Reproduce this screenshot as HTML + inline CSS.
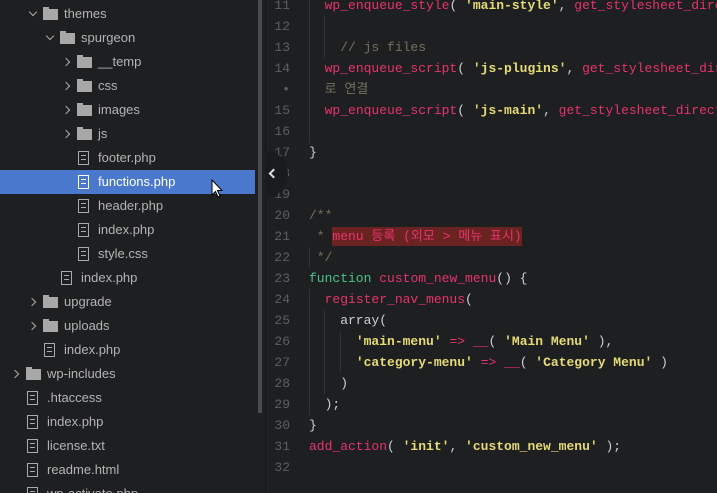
<!DOCTYPE html>
<html style="overflow:hidden"><head><meta charset="utf-8"><style>
body{margin:0;width:717px;height:493px;overflow:hidden;background:#1d1f21;position:relative;font-family:"Liberation Sans","Noto Sans CJK KR",sans-serif}
#side{position:absolute;left:0;top:0;width:258px;height:493px;background:#1e1f21;overflow:hidden}
.r{position:absolute;left:0;width:255px;height:24px;color:#b4b4b4;font-size:13px;line-height:24px}
.r.sel{background:#4a78cc;color:#fff}
.r span{position:absolute}
.chev{width:5px;height:5px;border-right:1.6px solid #aaa;border-bottom:1.6px solid #aaa;position:absolute}
.ch-r{transform:rotate(-45deg);top:9px}
.ch-d{transform:rotate(45deg);top:7px}
.fold{position:absolute;top:7px;width:15px;height:11px;background:#a8a8a8}
.fold:before{content:"";position:absolute;left:0;top:-2px;width:6px;height:2px;background:#a8a8a8}
.file{position:absolute;top:5px;width:11px;height:14px;border:1.3px solid #aaa;box-sizing:border-box;background:repeating-linear-gradient(#0000 0 3px,#aaa 3px 4px);background-clip:content-box;padding:2px 2px 1px 2px}
.sel .file{border-color:#fff;background:repeating-linear-gradient(#0000 0 3px,#fff 3px 4px);background-clip:content-box}
#sb{position:absolute;left:258px;top:0;width:4px;height:413px;background:#4b4b4b}
#gut{position:absolute;left:265px;top:0;width:40px;height:493px;background:#1d1f21;border-left:1px solid #151515}
.ln{position:absolute;left:265px;width:25px;text-align:right;color:#5e5e5e;font:13px "Liberation Mono",monospace;line-height:21px}
.c{position:absolute;left:309px;width:408px;overflow:hidden;white-space:pre;font:13px "Liberation Mono","Noto Sans CJK KR",monospace;line-height:21px;color:#cfcfcf}
.p{color:#e8336e}.y{color:#e6db74;font-weight:bold}.g{color:#4cc38a}.cm{color:#75715e}
.hl{background:#6a2320;color:#e8336e;padding:2px 0}
.gd{position:absolute;width:1px;background:#333}
</style></head><body>
<div id="side">
<div class="r" style="top:2px"><i class="chev ch-d" style="left:30px"></i><i class="fold" style="left:43px"></i><span style="left:64px">themes</span></div>
<div class="r" style="top:26px"><i class="chev ch-d" style="left:47px"></i><i class="fold" style="left:60px"></i><span style="left:81px">spurgeon</span></div>
<div class="r" style="top:50px"><i class="chev ch-r" style="left:63px"></i><i class="fold" style="left:77px"></i><span style="left:98px">__temp</span></div>
<div class="r" style="top:74px"><i class="chev ch-r" style="left:63px"></i><i class="fold" style="left:77px"></i><span style="left:98px">css</span></div>
<div class="r" style="top:98px"><i class="chev ch-r" style="left:63px"></i><i class="fold" style="left:77px"></i><span style="left:98px">images</span></div>
<div class="r" style="top:122px"><i class="chev ch-r" style="left:63px"></i><i class="fold" style="left:77px"></i><span style="left:98px">js</span></div>
<div class="r" style="top:146px"><i class="file" style="left:78px"></i><span style="left:98px">footer.php</span></div>
<div class="r sel" style="top:170px"><i class="file" style="left:78px"></i><span style="left:98px">functions.php</span></div>
<div class="r" style="top:194px"><i class="file" style="left:78px"></i><span style="left:98px">header.php</span></div>
<div class="r" style="top:218px"><i class="file" style="left:78px"></i><span style="left:98px">index.php</span></div>
<div class="r" style="top:242px"><i class="file" style="left:78px"></i><span style="left:98px">style.css</span></div>
<div class="r" style="top:266px"><i class="file" style="left:61px"></i><span style="left:81px">index.php</span></div>
<div class="r" style="top:290px"><i class="chev ch-r" style="left:29px"></i><i class="fold" style="left:43px"></i><span style="left:64px">upgrade</span></div>
<div class="r" style="top:314px"><i class="chev ch-r" style="left:29px"></i><i class="fold" style="left:43px"></i><span style="left:64px">uploads</span></div>
<div class="r" style="top:338px"><i class="file" style="left:44px"></i><span style="left:64px">index.php</span></div>
<div class="r" style="top:362px"><i class="chev ch-r" style="left:12px"></i><i class="fold" style="left:26px"></i><span style="left:47px">wp-includes</span></div>
<div class="r" style="top:386px"><i class="file" style="left:27px"></i><span style="left:47px">.htaccess</span></div>
<div class="r" style="top:410px"><i class="file" style="left:27px"></i><span style="left:47px">index.php</span></div>
<div class="r" style="top:434px"><i class="file" style="left:27px"></i><span style="left:47px">license.txt</span></div>
<div class="r" style="top:458px"><i class="file" style="left:27px"></i><span style="left:47px">readme.html</span></div>
<div class="r" style="top:482px"><i class="file" style="left:27px"></i><span style="left:47px">wp-activate.php</span></div>
<svg style="position:absolute;left:211px;top:179px" width="14" height="20" viewBox="0 0 14 20"><path d="M1 1 L1 16 L4.5 12.5 L7 18 L9 17 L6.5 11.5 L11 11.5 Z" fill="#fff" stroke="#000" stroke-width="1"/></svg>
</div>
<div id="sb"></div>
<div id="gut"></div>
<div class="gd" style="left:309px;top:0;height:143px"></div>
<div class="gd" style="left:324px;top:16px;height:42px"></div>
<div class="gd" style="left:309px;top:247px;height:21px"></div>
<div class="gd" style="left:309px;top:289px;height:126px"></div>
<div class="gd" style="left:324px;top:310px;height:84px"></div>
<div class="gd" style="left:340px;top:331px;height:42px"></div>
<div class="ln" style="top:-5px">11<br>12<br>13<br>14<br>•<br>15<br>16<br>17<br>18<br>19<br>20<br>21<br>22<br>23<br>24<br>25<br>26<br>27<br>28<br>29<br>30<br>31<br>32</div>
<div class="c" style="top:-5px">  <span class="p">wp_enqueue_style</span>( <span class="y">'main-style'</span>, <span class="p">get_stylesheet_directory_uri</span>
 
    <span class="cm">// js files</span>
  <span class="p">wp_enqueue_script</span>( <span class="y">'js-plugins'</span>, <span class="p">get_stylesheet_directory_uri</span>
  <span class="cm">로 연결</span>
  <span class="p">wp_enqueue_script</span>( <span class="y">'js-main'</span>, <span class="p">get_stylesheet_directory_uri</span>
 
}
 
 
<span class="cm">/**</span>
<span class="cm"> * </span><span class="hl">menu 등록 (외모 &gt; 메뉴 표시)</span>
<span class="cm"> */</span>
<span class="g">function</span> <span class="p">custom_new_menu</span>() {
  <span class="p">register_nav_menus</span>(
    array(
      <span class="y">'main-menu'</span> <span class="p">=&gt;</span> <span class="p">__</span>( <span class="y">'Main Menu'</span> ),
      <span class="y">'category-menu'</span> <span class="p">=&gt;</span> <span class="p">__</span>( <span class="y">'Category Menu'</span> )
    )
  );
}
<span class="p">add_action</span>( <span class="y">'init'</span>, <span class="y">'custom_new_menu'</span> );
</div>
<div style="position:absolute;left:246px;top:151px;width:42px;height:46px;border-radius:50%;background:#1a1b1d;clip-path:inset(0 0 0 19px)"></div>
<i class="chev" style="left:270px;top:170px;transform:rotate(135deg);border-color:#ddd;border-width:2px"></i>
</body></html>
